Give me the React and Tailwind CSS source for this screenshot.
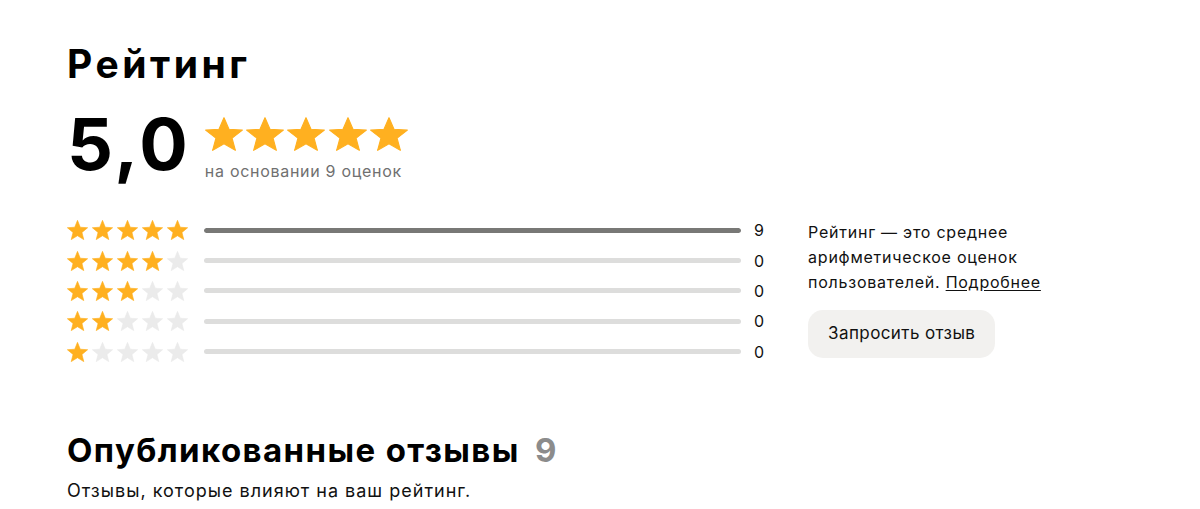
const ROWS = [
  { stars: 5, count: 9 },
  { stars: 4, count: 0 },
  { stars: 3, count: 0 },
  { stars: 2, count: 0 },
  { stars: 1, count: 0 },
];
const TOTAL = 9;

// star drawn to fill its box
function StarIcon({ filled, className }) {
  const c = filled ? "#ffb020" : "#ebebeb";
  return (
    <svg viewBox="0.15 -0.35 19.7 18.8" preserveAspectRatio="none" className={className}>
      <path
        d="M10 0L12.59 6.44L19.51 6.91L14.18 11.36L15.88 18.09L10 14.4L4.12 18.09L5.82 11.36L0.49 6.91L7.41 6.44Z"
        fill={c}
        stroke={c}
        strokeWidth="0.6"
        strokeLinejoin="round"
      />
    </svg>
  );
}

function RatingRow({ stars, count }) {
  const pct = (count / TOTAL) * 100;
  return (
    <div className="flex items-center h-[30.4px]">
      <div className="flex gap-[4px] w-[137px]">
        {[1, 2, 3, 4, 5].map(i => (
          <StarIcon key={i} filled={i <= stars} className="w-[21px] h-[20px]" />
        ))}
      </div>
      <div className="w-[537px] h-[5px] rounded-full bg-[#dddddc] overflow-hidden">
        <div className="h-full rounded-full bg-[#787876]" style={{ width: `${pct}%` }} />
      </div>
      <span className="ml-[13px] text-[16px] leading-[20px] text-[#111]">{count}</span>
    </div>
  );
}

export default function App() {
  return (
    <div className="min-h-screen bg-white text-black font-['Inter',sans-serif] pl-[67px] pt-[44px]">
      <h1 className="text-[39px] font-bold leading-[39px] tracking-[3.5px]">Рейтинг</h1>

      <div className="flex items-start mt-[25px]">
        <div className="text-[72px] font-bold leading-[72px] tracking-[3px]">5,0</div>
        <div className="ml-[14px] pt-[9px]">
          <div className="flex gap-[3.3px]">
            {[1, 2, 3, 4, 5].map(i => (
              <StarIcon key={i} filled className="w-[38px] h-[34px]" />
            ))}
          </div>
          <p className="mt-[10px] text-[16px] leading-[20px] tracking-[0.7px] text-[#707070]">
            на основании 9 оценок
          </p>
        </div>
      </div>

      <div className="flex mt-[34px]">
        <div className="flex flex-col">
          {ROWS.map(r => (
            <RatingRow key={r.stars} {...r} />
          ))}
        </div>
        <div className="ml-[44px] pt-[5px]">
          <p className="text-[16px] leading-[25px] tracking-[0.75px] text-[#111] w-[270px]">
            Рейтинг — это среднее арифметическое оценок пользователей.{" "}
            <a className="underline underline-offset-2">Подробнее</a>
          </p>
          <button className="mt-[15px] h-[48px] px-[20px] rounded-[15px] bg-[#f2f1ef] text-[17px] tracking-[0.4px] text-[#111]">
            Запросить отзыв
          </button>
        </div>
      </div>

      <h2 className="mt-[63px] text-[33px] font-bold leading-[40px] tracking-[1.4px]">
        Опубликованные отзывы <span className="ml-[6px] text-[#8c8c8c]">9</span>
      </h2>
      <p className="mt-[9px] text-[18px] leading-[24px] tracking-[1px] text-[#111]">
        Отзывы, которые влияют на ваш рейтинг.
      </p>
    </div>
  );
}
